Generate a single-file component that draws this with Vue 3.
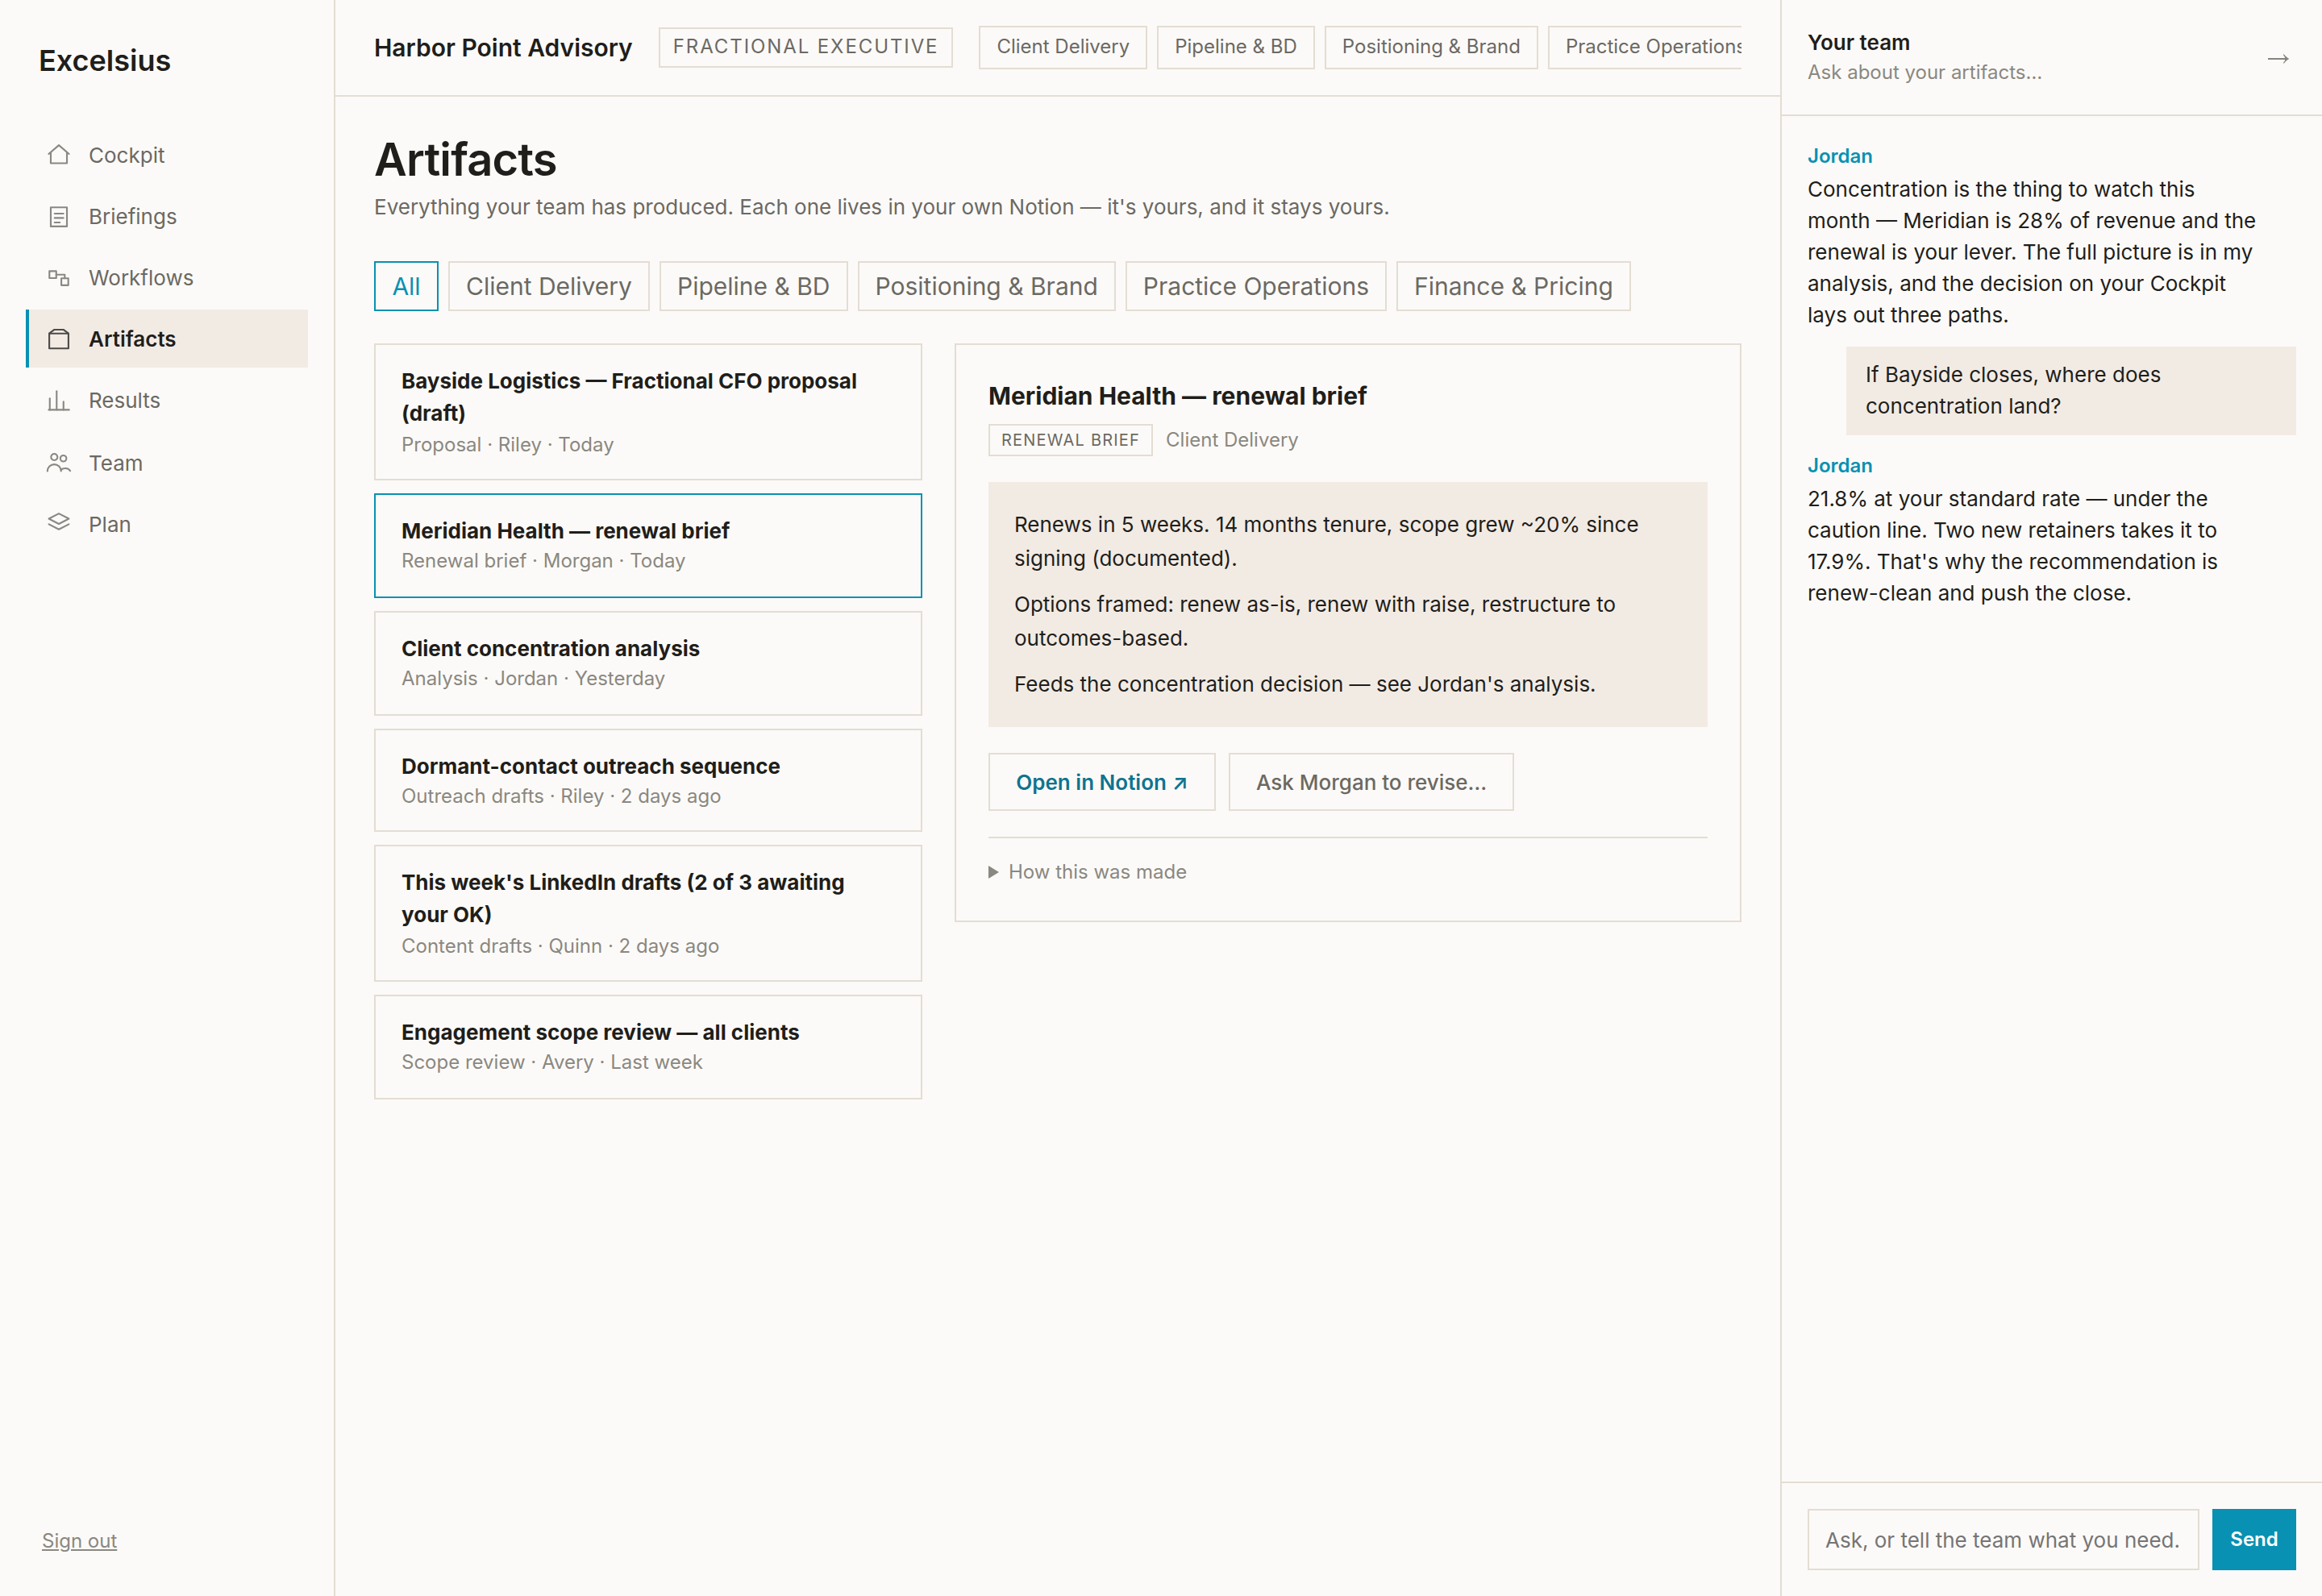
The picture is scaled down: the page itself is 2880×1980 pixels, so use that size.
<script setup>
const nav = [
  { label: 'Cockpit', paths: ['M2.6 9.4 10 3l7.4 6.4', 'M4.1 8.3V16.2H15.9V8.3'] },
  { label: 'Briefings', paths: ['M4.1 3.7H15.9V17.6H4.1Z', 'M6.9 8.2H13.3', 'M6.9 11.4H13.3', 'M6.9 14.7H10.7'] },
  { label: 'Workflows', paths: ['M3.1 5.5H8.1V10.6H3.1Z', 'M11.8 10.7H16.9V15.8H11.8Z', 'M8.1 8.1H14.3V10.7'] },
  { label: 'Artifacts', active: true, paths: ['M3 6.3H17V17.2H3Z', 'M3 6.3 6.7 3.5H13.3L17 6.3'] },
  { label: 'Results', paths: ['M2.6 17.3H17.5', 'M3.4 17.3V9', 'M8.4 17.3V3.7', 'M13.4 17.3V11.4'] },
  {
    label: 'Team',
    paths: [
      'M9 5.9a2.35 2.35 0 1 1-4.7 0a2.35 2.35 0 1 1 4.7 0Z',
      'M15.5 6.9a2.2 2.2 0 1 1-4.4 0a2.2 2.2 0 1 1 4.4 0Z',
      'M1.7 16.2a4.95 4.95 0 0 1 9.9 0',
      'M11.6 15.3C13.2 13.5 16.9 13.7 18.3 16',
    ],
  },
  { label: 'Plan', paths: ['M10 2.4 17.3 6.2 10 10 2.7 6.2Z', 'M2.7 10.2 10 14l7.3-3.8'] },
]

const areas = ['Client Delivery', 'Pipeline & BD', 'Positioning & Brand', 'Practice Operations']
const filters = ['All', ...areas, 'Finance & Pricing']

const artifacts = [
  { title: 'Bayside Logistics — Fractional CFO proposal (draft)', meta: 'Proposal · Riley · Today', size: 'tall' },
  { title: 'Meridian Health — renewal brief', meta: 'Renewal brief · Morgan · Today', selected: true },
  { title: 'Client concentration analysis', meta: 'Analysis · Jordan · Yesterday' },
  { title: 'Dormant-contact outreach sequence', meta: 'Outreach drafts · Riley · 2 days ago', size: 'tight' },
  { title: "This week's LinkedIn drafts (2 of 3 awaiting your OK)", meta: 'Content drafts · Quinn · 2 days ago', size: 'tall' },
  { title: 'Engagement scope review — all clients', meta: 'Scope review · Avery · Last week' },
]

const brief = [
  'Renews in 5 weeks. 14 months tenure, scope grew ~20% since signing (documented).',
  'Options framed: renew as-is, renew with raise, restructure to outcomes-based.',
  "Feeds the concentration decision — see Jordan's analysis.",
]

const messages = [
  {
    from: 'Jordan',
    text: 'Concentration is the thing to watch this month — Meridian is 28% of revenue and the renewal is your lever. The full picture is in my analysis, and the decision on your Cockpit lays out three paths.',
  },
  { text: 'If Bayside closes, where does concentration land?' },
  {
    from: 'Jordan',
    text: "21.8% at your standard rate — under the caution line. Two new retainers takes it to 17.9%. That's why the recommendation is renew-clean and push the close.",
  },
]
</script>

<template>
  <div class="app">
    <aside class="sidebar">
      <div class="brand">Excelsius</div>
      <nav class="nav">
        <a v-for="item in nav" :key="item.label" class="nav-item" :class="{ active: item.active }">
          <svg class="nav-icon" viewBox="0 0 20 20">
            <path v-for="d in item.paths" :key="d" :d="d" />
          </svg>
          <span class="nav-label">{{ item.label }}</span>
        </a>
      </nav>
      <a class="signout">Sign out</a>
    </aside>

    <main class="main">
      <header class="topbar">
        <div class="company">Harbor Point Advisory</div>
        <div class="role">FRACTIONAL EXECUTIVE</div>
        <div class="areas">
          <span v-for="a in areas" :key="a" class="area">{{ a }}</span>
        </div>
      </header>

      <section class="content">
        <h1>Artifacts</h1>
        <p class="lead">Everything your team has produced. Each one lives in your own Notion — it's yours, and it stays yours.</p>

        <div class="filters">
          <button v-for="(f, i) in filters" :key="f" class="filter" :class="{ on: i === 0 }">{{ f }}</button>
        </div>

        <div class="columns">
          <div class="list">
            <article v-for="a in artifacts" :key="a.title" class="card" :class="[a.size, { selected: a.selected }]">
              <div class="card-title">{{ a.title }}</div>
              <div class="card-meta">{{ a.meta }}</div>
            </article>
          </div>

          <article class="detail">
            <h2>Meridian Health — renewal brief</h2>
            <div class="detail-meta">
              <span class="kind">RENEWAL BRIEF</span>
              <span class="area-name">Client Delivery</span>
            </div>
            <div class="brief">
              <p v-for="p in brief" :key="p">{{ p }}</p>
            </div>
            <div class="actions">
              <button class="btn primary">Open in Notion ↗</button>
              <button class="btn">Ask Morgan to revise…</button>
            </div>
            <div class="made">
              <svg class="marker" viewBox="0 0 13 16"><path d="M0 0 13 8 0 16Z" /></svg>
              <span>How this was made</span>
            </div>
          </article>
        </div>
      </section>
    </main>

    <aside class="team">
      <header class="team-head">
        <div>
          <div class="team-title">Your team</div>
          <div class="team-sub">Ask about your artifacts…</div>
        </div>
        <svg class="collapse" viewBox="0 0 27 12">
          <path d="M0 5.1H21.2C20.8 3.4 20 2 18.8 .9L19.8 .3C21.6 2.8 24 4.8 26.4 6C24 7.200 21.600 9.200 19.800 11.700L18.800 11.100C20 10 20.800 8.600 21.200 6.900H0Z" />
        </svg>
      </header>
      <div class="thread">
        <template v-for="(m, i) in messages" :key="i">
          <div v-if="m.from" class="msg">
            <div class="from">{{ m.from }}</div>
            <div class="text">{{ m.text }}</div>
          </div>
          <div v-else class="bubble">{{ m.text }}</div>
        </template>
      </div>
      <footer class="composer">
        <div class="field">Ask, or tell the team what you need.</div>
        <button class="send">Send</button>
      </footer>
    </aside>
  </div>
</template>

<style>
body {
  margin: 0;
  background: #fcfaf8;
}
</style>

<style scoped>
.app {
  --line: #e3ddd3;
  --ink: #1f1e1b;
  --muted: #6b6963;
  --faint: #8a8880;
  --soft: #f2ebe4;
  --teal: #0891b2;
  display: flex;
  width: 2880px;
  height: 1980px;
  overflow: hidden;
  background: #fcfaf8;
  color: var(--ink);
  font-family: Inter, "Liberation Sans", sans-serif;
  font-size: 26px;
  line-height: 40px;
}
.app * {
  box-sizing: border-box;
}
h1,
h2,
p {
  margin: 0;
}
button {
  font: inherit;
  color: inherit;
  background: none;
  margin: 0;
  white-space: nowrap;
}

.sidebar {
  display: flex;
  flex-direction: column;
  flex: none;
  width: 416px;
  padding: 48px 32px 49px;
  border-right: 2px solid var(--line);
}
.brand {
  padding-left: 16px;
  height: 108px;
  font-size: 36px;
  line-height: 54px;
  font-weight: 600;
}
.nav {
  display: flex;
  flex-direction: column;
  gap: 4px;
}
.nav-item {
  display: flex;
  align-items: center;
  gap: 20px;
  height: 72px;
  padding: 0 20px;
  border-left: 4px solid transparent;
  color: var(--muted);
}
.nav-item:nth-child(6) {
  margin-top: 2px;
}
.nav-label {
  padding-top: 1px;
  line-height: 41px;
}
.nav-item.active {
  background: var(--soft);
  border-left-color: var(--teal);
  color: var(--ink);
  font-weight: 600;
}
.nav-icon {
  width: 34px;
  height: 34px;
  fill: none;
  stroke: currentColor;
  stroke-width: 1.25;
  stroke-linecap: round;
  stroke-linejoin: round;
  opacity: 0.78;
}
.signout {
  margin-top: auto;
  padding-left: 20px;
  font-size: 24px;
  line-height: 38px;
  color: var(--faint);
  text-decoration: underline;
}

.main {
  flex: 1;
  min-width: 0;
}
.topbar {
  display: flex;
  align-items: center;
  gap: 32px;
  height: 120px;
  padding: 0 48px;
  border-bottom: 2px solid var(--line);
}
.company {
  flex: none;
  font-size: 30px;
  font-weight: 600;
}
.role {
  flex: none;
  height: 50px;
  padding: 0 16px;
  border: 2px solid var(--line);
  font-size: 24px;
  line-height: 44px;
  letter-spacing: 1.9px;
  color: var(--muted);
}
.areas {
  display: flex;
  gap: 12px;
  min-width: 0;
  overflow: hidden;
}
.area {
  flex: none;
  height: 54px;
  padding: 0 20px;
  border: 2px solid var(--line);
  font-size: 24px;
  line-height: 48px;
  color: var(--muted);
}

.content {
  padding: 44px 48px;
}
h1 {
  font-size: 56px;
  line-height: 68px;
  font-weight: 600;
  letter-spacing: -0.8px;
}
.lead {
  margin-top: 5px;
  color: var(--muted);
}
.filters {
  display: flex;
  gap: 12px;
  margin-top: 47px;
}
.filter {
  height: 62px;
  padding: 0 20px;
  border: 2px solid var(--line);
  font-size: 30px;
  line-height: 58px;
  color: var(--muted);
}
.filter.on {
  width: 80px;
  border-color: var(--teal);
  color: var(--teal);
}
.columns {
  display: flex;
  align-items: flex-start;
  gap: 40px;
  margin-top: 40px;
}
.list {
  display: flex;
  flex-direction: column;
  gap: 16px;
  width: 680px;
  flex: none;
}
.card {
  height: 130px;
  padding: 25px 32px 0;
  border: 2px solid var(--line);
}
.card.selected {
  border-color: var(--teal);
}
.card.tight {
  height: 128px;
}
.card.tall {
  height: 170px;
}
.card-title {
  font-weight: 700;
}
.card-meta {
  margin-top: -2px;
  font-size: 24px;
  line-height: 37px;
  color: var(--faint);
}
.card.tall .card-meta {
  margin-top: 0;
}

.detail {
  flex: 1;
  min-width: 0;
  height: 718px;
  padding: 40px;
  border: 2px solid var(--line);
}
h2 {
  font-size: 30px;
  line-height: 46px;
  font-weight: 700;
}
.detail-meta {
  display: flex;
  align-items: center;
  gap: 16px;
  height: 40px;
  margin-top: 12px;
}
.kind {
  height: 40px;
  padding: 0 14px;
  border: 2px solid var(--line);
  font-size: 20px;
  line-height: 36px;
  letter-spacing: 1.2px;
  color: var(--muted);
}
.area-name {
  font-size: 24px;
  color: var(--faint);
}
.brief {
  display: flex;
  flex-direction: column;
  gap: 16px;
  margin-top: 32px;
  padding: 32px;
  background: var(--soft);
  line-height: 41.6px;
}
.actions {
  display: flex;
  gap: 16px;
  margin-top: 32px;
}
.btn {
  height: 72px;
  padding: 2px 32px 0;
  border: 2px solid var(--line);
  font-weight: 500;
  color: var(--muted);
}
.btn.primary {
  min-width: 282px;
  font-weight: 600;
  color: #0e7490;
}
.made {
  display: flex;
  align-items: center;
  gap: 12px;
  margin-top: 32px;
  padding-top: 22px;
  border-top: 2px solid var(--line);
  font-size: 24px;
  color: var(--faint);
}
.marker {
  width: 13px;
  height: 16px;
  fill: currentColor;
}

.team {
  display: flex;
  flex-direction: column;
  flex: none;
  width: 672px;
  border-left: 2px solid var(--line);
}
.team-head {
  display: flex;
  align-items: center;
  justify-content: space-between;
  height: 144px;
  padding: 0 40px 0 32px;
  border-bottom: 2px solid var(--line);
}
.team-title {
  font-weight: 600;
  line-height: 38px;
}
.team-sub {
  font-size: 24px;
  line-height: 36px;
  color: var(--faint);
}
.collapse {
  width: 27px;
  height: 12px;
  margin-top: 4px;
  fill: #85837d;
}
.thread {
  flex: 1;
  padding: 32px;
}
.msg {
  max-width: 558px;
}
.from {
  font-size: 24px;
  line-height: 36px;
  font-weight: 600;
  color: var(--teal);
}
.text {
  margin-top: 3px;
  line-height: 39px;
}
.bubble {
  margin: 20px 0 20px 48px;
  padding: 15px 24px 17px;
  background: var(--soft);
  line-height: 39px;
}
.composer {
  display: flex;
  gap: 16px;
  height: 142px;
  padding: 32px;
  border-top: 2px solid var(--line);
}
.field {
  flex: 1;
  height: 76px;
  padding: 0 20px;
  border: 2px solid var(--line);
  line-height: 74px;
  color: #757575;
  white-space: nowrap;
  overflow: hidden;
}
.send {
  width: 104px;
  height: 76px;
  padding: 0;
  border: 0;
  background: var(--teal);
  color: #fff;
  font-size: 24px;
  font-weight: 600;
}
</style>
